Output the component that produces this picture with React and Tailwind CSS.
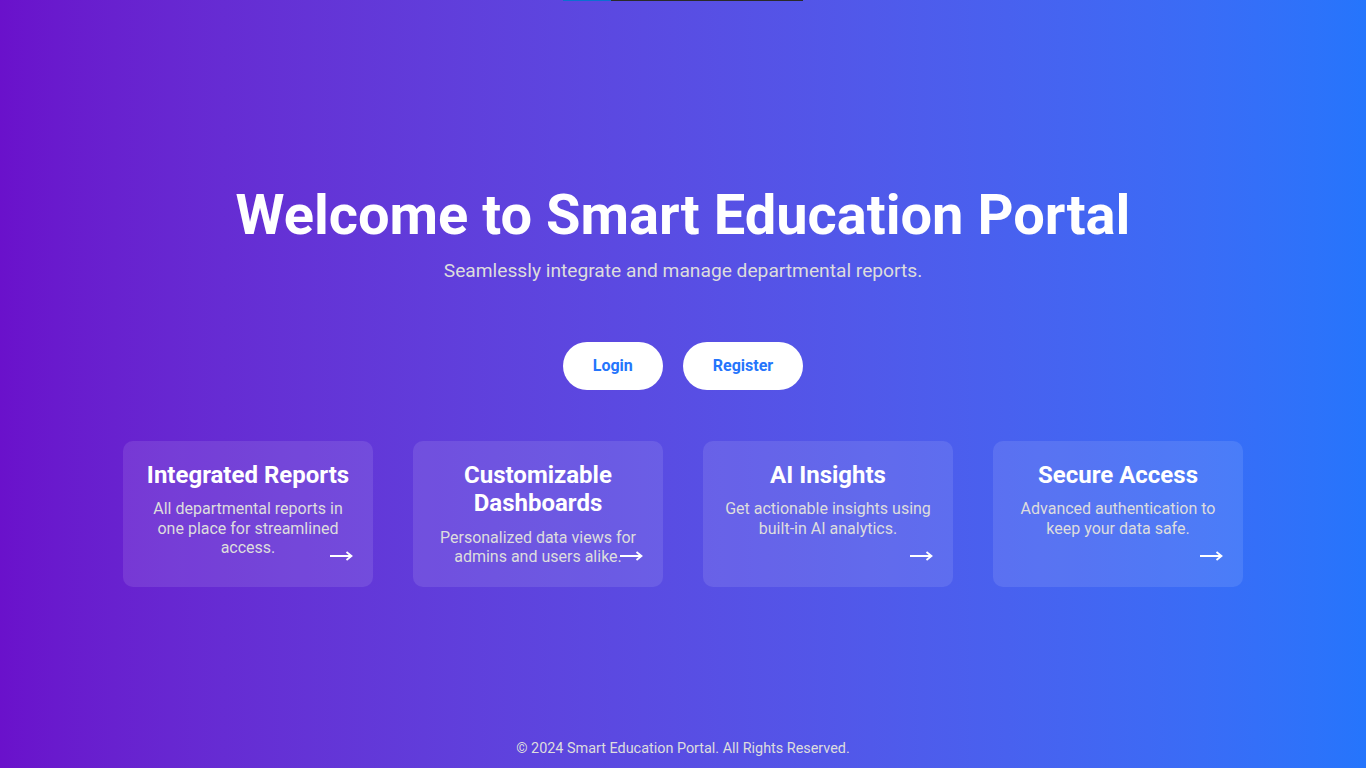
const features = [
  {
    title: 'Integrated Reports',
    text: 'All departmental reports in one place for streamlined access.',
  },
  {
    title: 'Customizable Dashboards',
    text: 'Personalized data views for admins and users alike.',
  },
  {
    title: 'AI Insights',
    text: 'Get actionable insights using built-in AI analytics.',
  },
  {
    title: 'Secure Access',
    text: 'Advanced authentication to keep your data safe.',
  },
]

function ArrowIcon() {
  return (
    <svg width="23" height="10" viewBox="0 0 23 10" fill="none" stroke="white" strokeWidth="2">
      <path d="M0 5H21" />
      <path d="M16.5 1L21.5 5L16.5 9" strokeWidth="1.8" />
    </svg>
  )
}

function FeatureCard({ title, text }) {
  return (
    <div className="relative w-[250px] rounded-[10px] bg-white/10 p-5 text-center">
      <h3 className="mb-[10px] text-2xl leading-[1.2] font-bold text-white">{title}</h3>
      <p className="text-base leading-[1.2] text-[#dddddd]">{text}</p>
      {/* arrow sits over the card corner */}
      <span className="absolute right-[20px] bottom-[26px] block">
        <ArrowIcon />
      </span>
    </div>
  )
}

export default function App() {
  return (
    <div className="grid h-screen grid-rows-[1fr_auto_1fr] bg-gradient-to-r from-[#6a11cb] to-[#2575fc] font-['Roboto','Liberation_Sans',sans-serif] text-white">
      {/* thin strip at the very top */}
      <div className="flex h-px w-[240px] self-start justify-self-center">
        <div className="w-[48px] bg-[#0b6fd1]" />
        <div className="flex-1 bg-[#2a2a2a]" />
      </div>

      <main className="flex flex-col items-center pt-px text-center">
        <h1 className="mb-[9px] text-[56px] leading-[1.2] font-bold">
          Welcome to Smart Education Portal
        </h1>
        <p className="text-[19.2px] leading-[1.2] text-[#dddddd]">
          Seamlessly integrate and manage departmental reports.
        </p>

        <div className="mt-[60px] flex gap-5">
          <button className="h-12 rounded-full bg-white px-[30px] text-base font-bold text-[#2575fc]">
            Login
          </button>
          <button className="h-12 rounded-full bg-white px-[30px] text-base font-bold text-[#2575fc]">
            Register
          </button>
        </div>

        <div className="mt-[51px] flex gap-10">
          {features.map((f) => (
            <FeatureCard key={f.title} title={f.title} text={f.text} />
          ))}
        </div>
      </main>

      <footer className="self-end pb-[11px] text-center text-[14.4px] leading-[1.2] text-[#dddddd]">
        © 2024 Smart Education Portal. All Rights Reserved.
      </footer>
    </div>
  )
}
